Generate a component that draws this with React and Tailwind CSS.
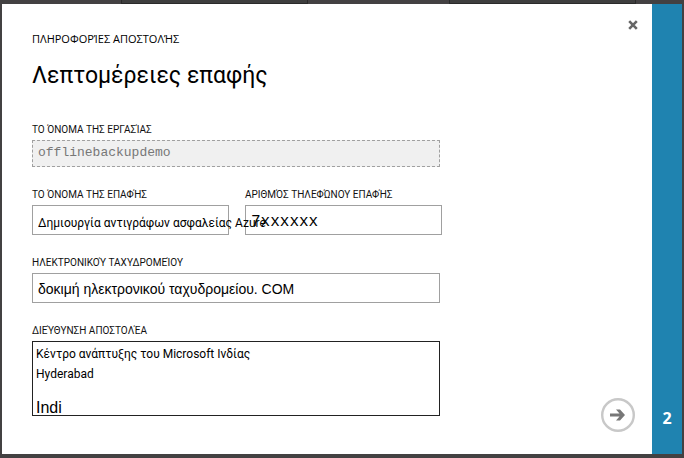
const label = "block w-fit whitespace-nowrap text-[10px] leading-4 font-['Roboto',sans-serif] text-[#111]";
const field = "flex border border-[#a0a0a0] bg-white";

export default function App() {
  return (
    <div className="flex h-screen min-h-[458px] flex-col bg-[#434142] font-['Open_Sans',sans-serif] text-black">
      <div className="flex h-1 shrink-0 items-start justify-between pr-12 pl-[121px]">
        <div className="h-1 w-[187px] border-x border-b border-[#2a2a2a] bg-[#3e3e3e]" />
        <div className="h-1 w-[187px] border-x border-b border-[#2a2a2a] bg-[#3e3e3e]" />
      </div>
      <div role="dialog" aria-labelledby="title" className="mx-0.5 mb-1 flex grow bg-white">
        <main className="flex grow items-stretch pl-[30px]">
          <form className="w-[410px] shrink-0 pt-[26px]">
            <p className="text-[11px] leading-[18px]">ΠΛΗΡΟΦΟΡΊΕΣ ΑΠΟΣΤΟΛΉΣ</p>
            <h1 id="title" className="mt-2.5 text-[23px] leading-9 font-['Roboto',sans-serif]">Λεπτομέρειες επαφής</h1>
            <label htmlFor="job" className={label + " mt-7"}>ΤΟ ΌΝΟΜΑ ΤΗΣ ΕΡΓΑΣΊΑΣ</label>
            <input id="job" disabled defaultValue="offlinebackupdemo" className="mt-0.5 block h-[27px] w-[408px] border border-dashed border-[#a0a0a0] bg-[#f0f0f0] px-[5px] pb-0.5 font-['Liberation_Mono',monospace] text-[13px] text-[#777]" />
            <div className="mt-5 flex gap-4">
              <div className="w-[197px]">
                <label htmlFor="contact" className={label}>ΤΟ ΌΝΟΜΑ ΤΗΣ ΕΠΑΦΉΣ</label>
                <div className={field + " mt-0.5 h-[30px]"}>
                  <input id="contact" defaultValue="Δημιουργία αντιγράφων ασφαλείας Azure" className="relative z-10 w-[236px] shrink-0 bg-transparent pt-1.5 pl-[5px] font-['Roboto',sans-serif] text-[12px] outline-none" />
                </div>
              </div>
              <div className="w-[197px]">
                <label htmlFor="phone" className={label}>ΑΡΙΘΜΌΣ ΤΗΛΕΦΏΝΟΥ ΕΠΑΦΉΣ</label>
                <div className={field + " mt-0.5 h-[30px]"}>
                  <input id="phone" type="tel" defaultValue="7xxxxxx" className="w-full bg-transparent px-[5px] pt-1 font-['Liberation_Mono',monospace] text-[16px] outline-none" />
                </div>
              </div>
            </div>
            <label htmlFor="email" className={label + " mt-5"}>ΗΛΕΚΤΡΟΝΙΚΟΎ ΤΑΧΥΔΡΟΜΕΊΟΥ</label>
            <div className={field + " mt-0.5 h-[30px] w-[408px]"}>
              <input id="email" defaultValue="δοκιμή ηλεκτρονικού ταχυδρομείου. COM" className="w-full bg-transparent px-[5px] pt-0.5 font-['Liberation_Sans',sans-serif] text-[14px] outline-none" />
            </div>
            <label htmlFor="address" className={label + " mt-5"}>ΔΙΕΎΘΥΝΣΗ ΑΠΟΣΤΟΛΈΑ</label>
            <div className="mt-0.5 flex h-[75px] w-[408px] flex-col overflow-hidden border border-[#222] px-[3px] pt-0.5">
              <textarea id="address" rows={2} defaultValue={"Κέντρο ανάπτυξης του Microsoft Ινδίας\nHyderabad"} className="block h-10 shrink-0 resize-none overflow-hidden font-['Roboto',sans-serif] text-[12px] leading-5 outline-none" />
              <input aria-label="Χώρα" defaultValue="Indi" className="mt-3.5 h-5 shrink-0 font-['Liberation_Sans',sans-serif] text-[16px] leading-5 outline-none" />
            </div>
          </form>
          <div className="flex grow flex-col items-end justify-between pt-[15px] pr-[13px] pb-[22px]">
            <button type="button" aria-label="Κλείσιμο" className="flex size-3 items-center justify-center">
              <svg viewBox="0 0 10 10" className="size-2.5" fill="none" stroke="#666" strokeWidth="2.6"><path d="M1.2 1.2 8.8 8.8M8.8 1.2 1.2 8.8" /></svg>
            </button>
            <button type="button" aria-label="Επόμενο" className="mr-1 size-[34px]">
              <svg viewBox="0 0 34 34" fill="none"><circle cx="17" cy="17" r="15.8" stroke="#c8c8c8" strokeWidth="2.4" /><path d="M9 15.500h9.500L15 11.500h4L24 17l-5 5.500h-4l3.500-4H9z" fill="#777" /></svg>
            </button>
          </div>
        </main>
        <aside className="flex w-[30px] shrink-0 items-end justify-center bg-[#1f83b0] pb-6 text-[16px] leading-6 font-bold text-white">2</aside>
      </div>
    </div>
  );
}
